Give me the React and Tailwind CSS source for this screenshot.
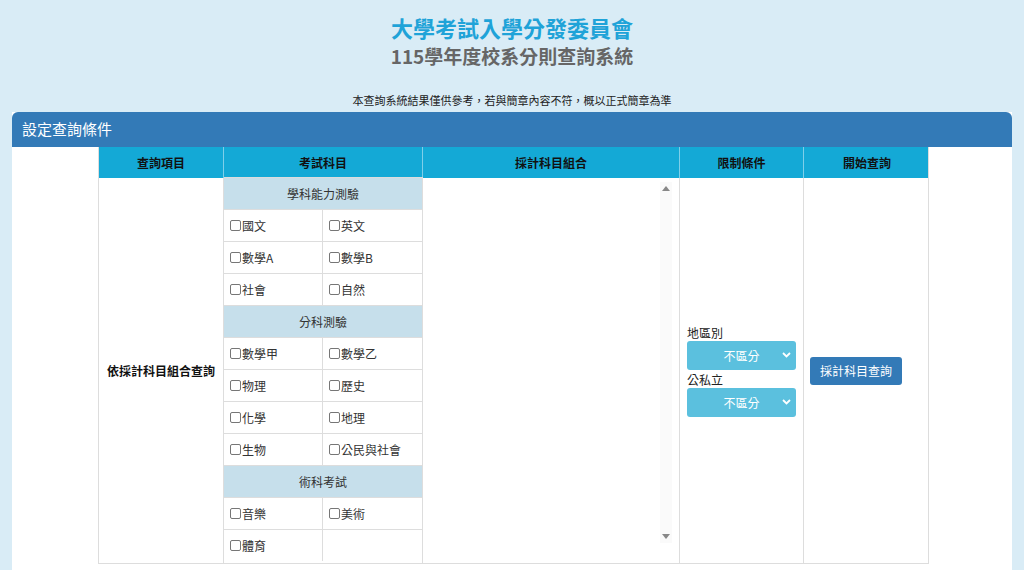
import React from "react";

const F = { fontFamily: '"Noto Sans CJK TC","Noto Sans",sans-serif' };

function Cb({ label }) {
  return (
    <span className="flex items-center text-[12px] text-[#333]">
      <span className="inline-block w-[11px] h-[11px] border border-[#767676] rounded-[2px] bg-white mr-[1px]" />
      {label}
    </span>
  );
}

function Pair({ a, b }) {
  return (
    <div className="grid grid-cols-[99px_100px] h-[32px] border-t border-[#ddd]">
      <div className="flex items-center pl-[6px] border-r border-[#ddd]">{a && <Cb label={a} />}</div>
      <div className="flex items-center pl-[6px]">{b && <Cb label={b} />}</div>
    </div>
  );
}

function Group({ t }) {
  return <div className="h-[32px] bg-[#c6dfeb] flex items-center justify-center text-[12px] text-[#333] border-t border-[#ddd]">{t}</div>;
}

function Sel() {
  return (
    <div className="w-[109px] h-[29px] bg-[#5bc0de] rounded-[3px] flex items-center justify-center relative text-white text-[12px]">
      不區分
      <svg className="absolute right-[5px] top-[11px]" width="9" height="6" viewBox="0 0 9 6"><path d="M1 1l3.5 3.5L8 1" stroke="white" strokeWidth="1.8" fill="none" /></svg>
    </div>
  );
}

export default function App() {
  return (
    <div style={F} className="w-[1024px] h-[570px] bg-[#d9ecf6] overflow-hidden">
      <div className="pt-[12px] text-center">
        <div className="text-[22px] font-bold text-[#1fa3d8] leading-[30px]">大學考試入學分發委員會</div>
        <div className="text-[19px] font-bold text-[#666] leading-[28px]">115學年度校系分則查詢系統</div>
        <div className="mt-[23px] text-[11px] text-[#222] leading-[14px]">本查詢系統結果僅供參考，若與簡章內容不符，概以正式簡章為準</div>
      </div>
      <div className="mx-[12px] mt-[5px] bg-white h-[470px]">
        <div className="h-[35px] bg-[#337ab7] rounded-t-[6px] flex items-center pl-[10px] text-white text-[15px]">設定查詢條件</div>
        <div className="ml-[86px] w-[831px] border-l border-r border-b border-[#ddd]">
          <div className="grid grid-cols-[125px_199px_257px_124px_126px] h-[31px] bg-[#14a9d6] text-[12px] font-bold text-[#111]">
            {["查詢項目", "考試科目", "採計科目組合", "限制條件", "開始查詢"].map((t, i) => (
              <div key={t} className={`flex items-center justify-center ${i < 4 ? "border-r border-[#7fcfe9]" : ""}`}>{t}</div>
            ))}
          </div>
          <div className="grid grid-cols-[125px_199px_257px_124px_126px] h-[385px] text-[12px]">
            <div className="flex items-center pl-[8px] font-bold text-[#111] border-r border-[#ddd]">依採計科目組合查詢</div>
            <div className="border-r border-[#ddd] -mt-px">
              <Group t="學科能力測驗" />
              <Pair a="國文" b="英文" />
              <Pair a="數學A" b="數學B" />
              <Pair a="社會" b="自然" />
              <Group t="分科測驗" />
              <Pair a="數學甲" b="數學乙" />
              <Pair a="物理" b="歷史" />
              <Pair a="化學" b="地理" />
              <Pair a="生物" b="公民與社會" />
              <Group t="術科考試" />
              <Pair a="音樂" b="美術" />
              <Pair a="體育" b="" />
            </div>
            <div className="border-r border-[#ddd] flex justify-end pr-[7px] pt-[4px] pb-[20px]">
              <div className="w-[12px] h-full bg-[#fafafa] flex flex-col items-center justify-between py-[4px]">
                <svg width="8" height="5" viewBox="0 0 8 5"><path d="M0 5L4 0l4 5z" fill="#888" /></svg>
                <svg width="8" height="5" viewBox="0 0 8 5"><path d="M0 0l4 5 4-5z" fill="#888" /></svg>
              </div>
            </div>
            <div className="border-r border-[#ddd] flex flex-col justify-center pl-[7px] text-[#222]">
              <div className="leading-[17px]">地區別</div>
              <Sel />
              <div className="leading-[17px] mt-[1px]">公私立</div>
              <Sel />
            </div>
            <div className="flex items-center pl-[6px]">
              <div className="w-[92px] h-[28px] bg-[#337ab7] rounded-[3px] text-white text-[12px] flex items-center justify-center">採計科目查詢</div>
            </div>
          </div>
        </div>
      </div>
    </div>
  );
}
